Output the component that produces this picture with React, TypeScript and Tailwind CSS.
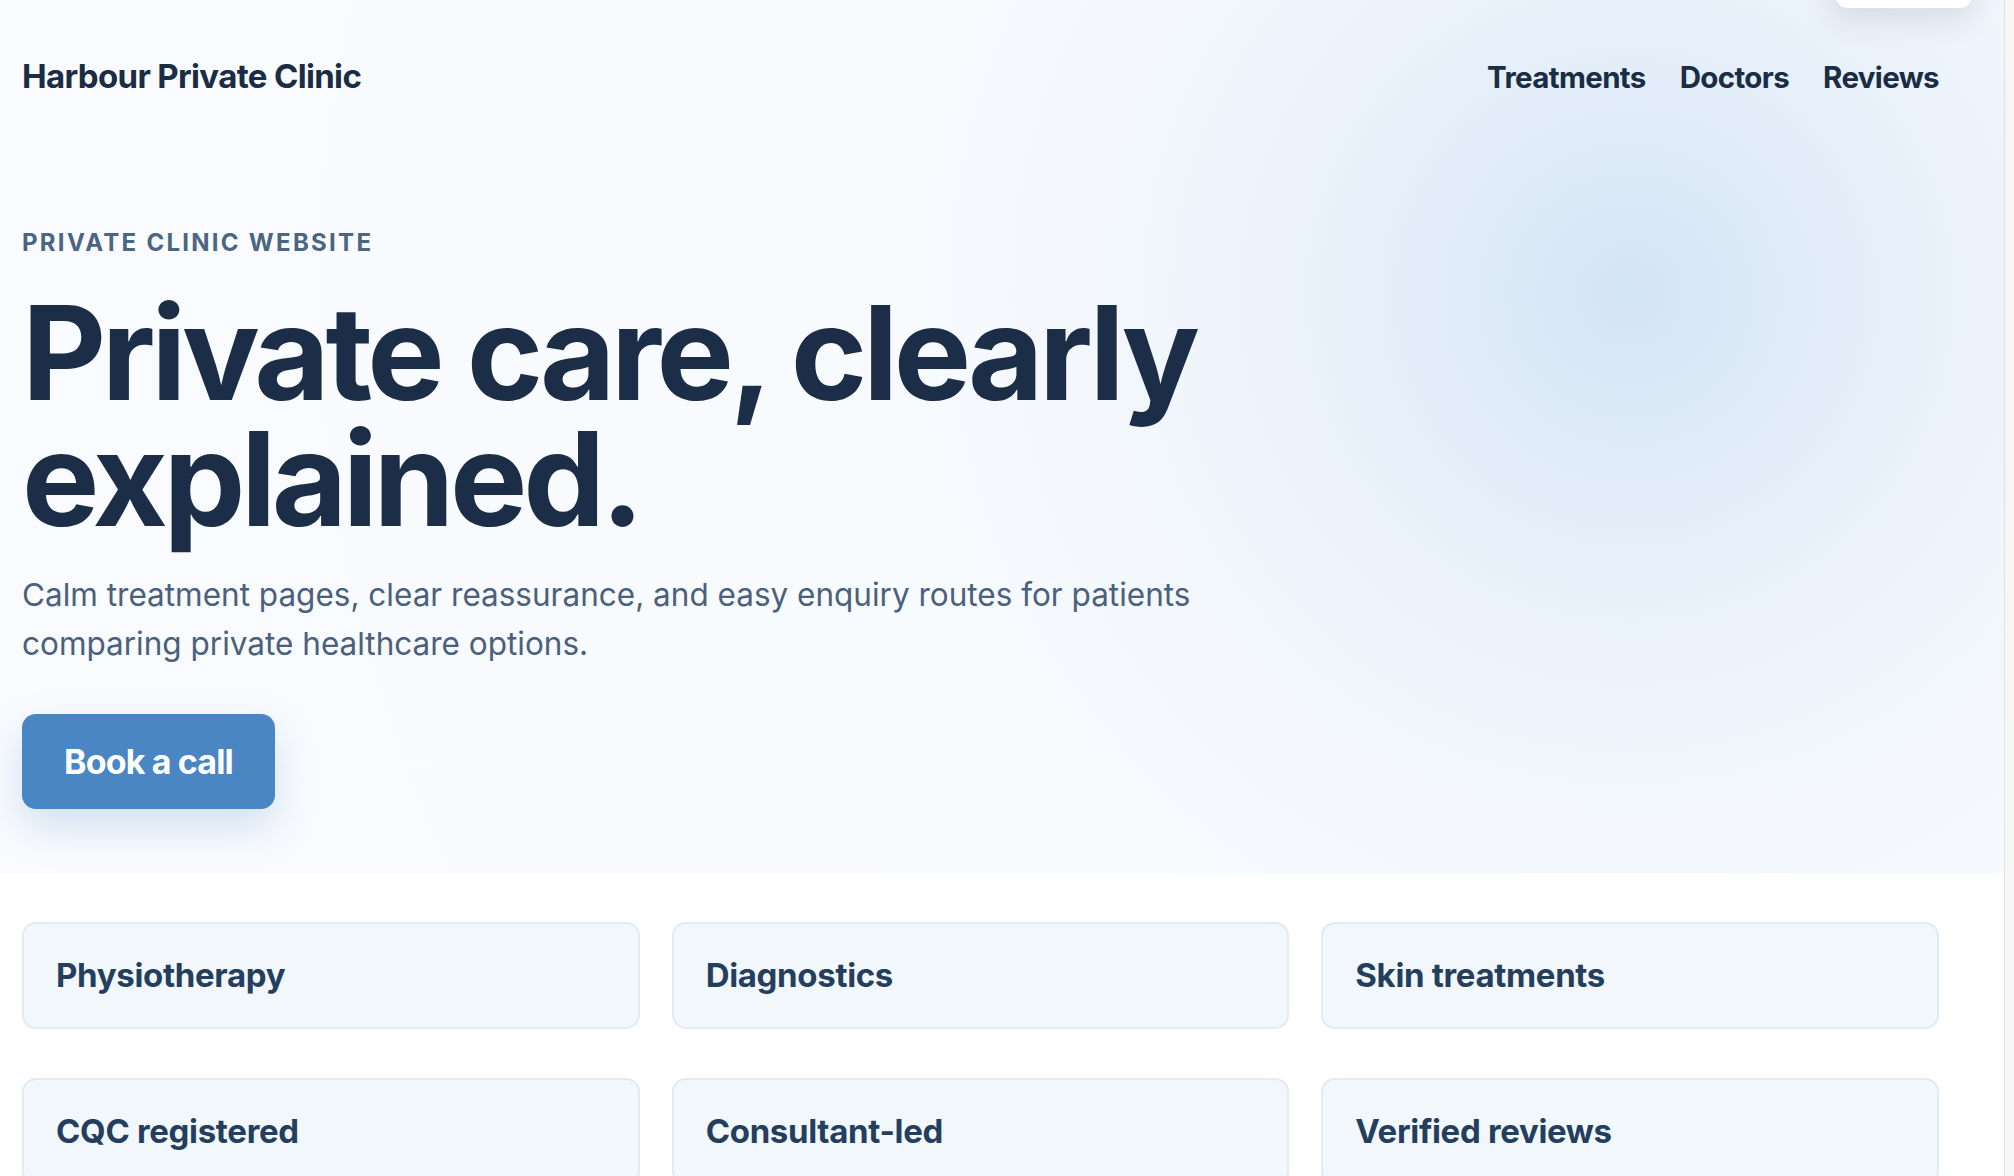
import React from "react";

const cards1 = ["Physiotherapy", "Diagnostics", "Skin treatments"];
const cards2 = ["CQC registered", "Consultant-led", "Verified reviews"];

function Card({ label }: { label: string }) {
  return (
    <div className="h-[107px] rounded-[14px] border-2 border-[#e0ebf6] bg-[#f2f7fc] px-[32px] flex items-center">
      <span className="text-[33px] font-bold tracking-[-0.01em] text-[#243f5d]">{label}</span>
    </div>
  );
}

export default function App() {
  return (
    <div className="flex w-full h-[1176px] overflow-hidden bg-white" style={{ fontFamily: "Inter, 'Noto Sans', sans-serif" }}>
      <div className="relative flex-1 flex flex-col">
        <section className="relative shrink-0 h-[873px] px-[22px] pr-[65px] bg-[radial-gradient(circle_at_1630px_295px,#d3e4f5_0px,#e4eef9_230px,#f1f6fc_470px,#f8fbfe_760px,#f9fbfe_100%)]">
          <div className="absolute right-[30px] top-[-40px] w-[140px] h-[49px] rounded-[14px] bg-white border border-[#dfe3e8] shadow-[0_10px_30px_rgba(30,50,80,0.12)]" />
          <header className="h-[154px] flex items-center justify-between">
            <div className="text-[33px] font-bold tracking-[-0.02em] text-[#1b2c45]">Harbour Private Clinic</div>
            <nav className="flex items-center gap-[34px]">
              <a className="text-[29.5px] font-bold tracking-[-0.022em] text-[#1b2c45]">Treatments</a>
              <a className="text-[29.5px] font-bold tracking-[-0.022em] text-[#1b2c45]">Doctors</a>
              <a className="text-[29.5px] font-bold tracking-[-0.022em] text-[#1b2c45]">Reviews</a>
            </nav>
          </header>
          <div className="mt-[74px] text-[24px] font-bold uppercase tracking-[0.095em] text-[#4b6583] leading-[30px]">
            Private clinic website
          </div>
          <h1 className="mt-[32px] text-[130px] font-bold leading-[126px] tracking-[-0.034em] text-[#1b2d47]">
            Private care, clearly
            <br />
            explained.
          </h1>
          <p className="mt-[28px] max-w-[1220px] text-[31.5px] leading-[49px] tracking-[0em] text-[#4a607c]">
            Calm treatment pages, clear reassurance, and easy enquiry routes for patients comparing private healthcare options.
          </p>
          <button className="mt-[46px] h-[95px] px-[42px] rounded-[14px] bg-[#4a85c4] text-white text-[34px] font-bold tracking-[-0.025em] shadow-[0_18px_40px_rgba(74,133,196,0.22)]">
            Book a call
          </button>
        </section>
        <section className="shrink-0 px-[22px] pr-[65px] pt-[49px] bg-white">
          <div className="grid grid-cols-3 gap-x-[32px] gap-y-[49px]">
            {cards1.map((c) => (
              <Card key={c} label={c} />
            ))}
            {cards2.map((c) => (
              <Card key={c} label={c} />
            ))}
          </div>
        </section>
      </div>
      <div className="w-[10px] shrink-0 bg-[#f6f6f6] border-l border-[#e2e2e2]" />
    </div>
  );
}
